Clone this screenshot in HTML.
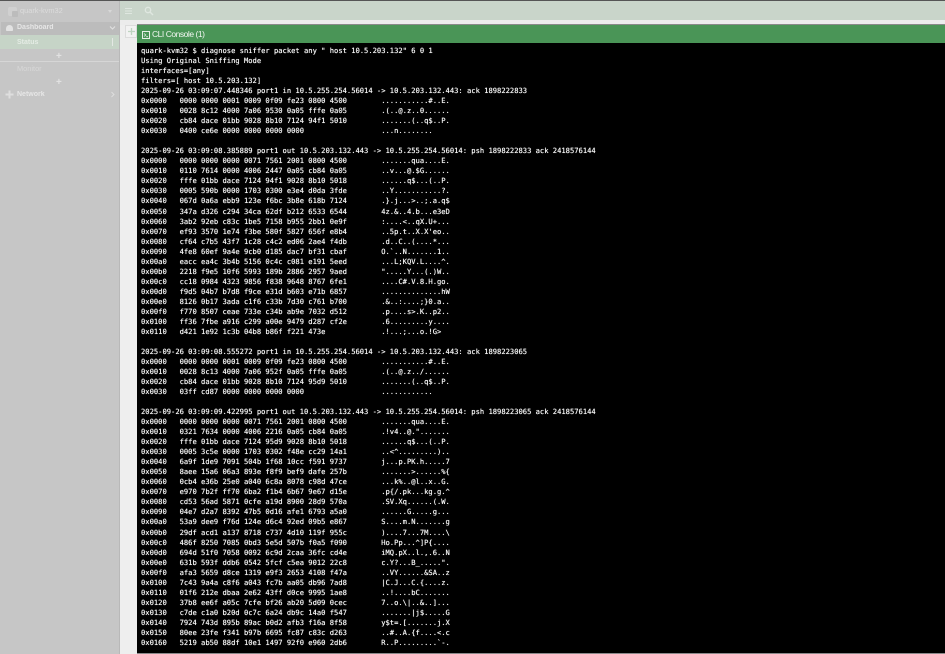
<!DOCTYPE html>
<html><head><meta charset="utf-8">
<style>
html,body{margin:0;padding:0;width:945px;height:654px;overflow:hidden;background:#eeeeee;font-family:"Liberation Sans",sans-serif}
div{position:absolute;box-sizing:border-box}
.t{white-space:nowrap;font-size:7px;line-height:10px;color:#e6e6e6;font-weight:bold;filter:blur(.35px)}
pre{position:absolute;left:141px;top:46px;margin:0;font-family:"DejaVu Sans Mono","Liberation Mono",monospace;font-size:7.13px;line-height:10.03px;color:#f4f4f4;white-space:pre;text-rendering:geometricPrecision;text-shadow:0 0 .5px #fff;filter:blur(.3px)}
</style></head><body>
<div style="left:0;top:0;width:945px;height:1px;background:#555"></div>
<div style="left:0;top:1px;width:119px;height:653px;background:#c6c6c6"></div>
<div style="left:119px;top:1px;width:1px;height:653px;background:#b8b8b8"></div>
<div style="left:120px;top:1px;width:825px;height:19px;background:#c9d5ca"></div>
<div style="left:120px;top:20px;width:825px;height:5px;background:#ececec"></div>
<div style="left:1px;top:22px;width:118px;height:13px;background:#bcbcbc"></div>
<div style="left:0;top:35px;width:119px;height:14px;background:#c6d4c7"></div>
<div style="left:0;top:61px;width:119px;height:1px;background:#d6d6d6"></div>
<div style="left:8px;top:7px;width:9px;height:9px;border-radius:2px;background:#d0d0d0"></div>
<div style="left:12px;top:11px;width:6px;height:6px;border-radius:1px;background:#bcbcbc"></div>
<div class="t" style="left:20px;top:6px;font-weight:normal;font-size:7.4px;color:#dcdcdc">quark-kvm32</div>
<div style="left:108px;top:10px;width:0;height:0;border:2px solid transparent;border-top:3px solid #d8d8d8"></div>
<div style="left:6px;top:25px;width:7px;height:6px;border-radius:4px 4px 1px 1px;background:#e2e2e2"></div>
<div class="t" style="left:17px;top:23px">Dashboard</div>
<svg style="position:absolute;left:109px;top:25px" width="7" height="6"><path d="M1 1.5L3.5 4L6 1.5" fill="none" stroke="#e2e2e2" stroke-width="1"/></svg>
<div class="t" style="left:17px;top:38px;color:#e4ece4">Status</div>
<div style="left:112px;top:38px;width:1px;height:8px;background:#e4e8e4"></div>
<div class="t" style="left:56px;top:52px;font-size:10px;color:#e2e2e2">+</div>
<div class="t" style="left:17px;top:64px;font-weight:normal;font-size:7.4px;color:#d8d8d8">Monitor</div>
<div class="t" style="left:56px;top:78px;font-size:10px;color:#e2e2e2">+</div>
<svg style="position:absolute;left:5px;top:90px" width="9" height="9"><path d="M4.5 .5V8.5M.5 4.5H8.5" stroke="#dedede" stroke-width="2"/></svg>
<div class="t" style="left:17px;top:90px">Network</div>
<svg style="position:absolute;left:110px;top:91px" width="5" height="7"><path d="M1.5 1L4 3.5L1.5 6" fill="none" stroke="#dedede" stroke-width="1"/></svg>
<svg style="position:absolute;left:124px;top:7px" width="9" height="8"><path d="M1 1.5H8M1 4H8M1 6.5H8" stroke="#dfe7e0" stroke-width="1"/></svg>
<svg style="position:absolute;left:144px;top:6px" width="10" height="10"><circle cx="4" cy="4" r="2.7" fill="none" stroke="#dfe7e0" stroke-width="1.3"/><path d="M6 6L9 9" stroke="#dfe7e0" stroke-width="1.4"/></svg>
<div style="left:125px;top:25px;width:12px;height:13px;border:1px solid #dcdcdc;background:#f2f2f2"></div>
<svg style="position:absolute;left:127px;top:27px" width="9" height="9"><path d="M4.5 1V8M1 4.5H8" stroke="#bfd4c1" stroke-width="1.3"/></svg>
<div style="left:137px;top:24px;width:808px;height:1px;background:#8a8a8a"></div>
<div style="left:137px;top:25px;width:808px;height:18px;background:#4a9557"></div>
<div style="left:137px;top:43px;width:808px;height:610px;background:#000"></div>
<div style="left:137px;top:653px;width:808px;height:1px;background:#8a8a8a"></div>
<svg style="position:absolute;left:142px;top:30.5px" width="8" height="8"><rect x=".5" y=".5" width="7" height="7" fill="none" stroke="#e8f0e8" stroke-width="1"/><path d="M2 2.5L3.8 4L2 5.5M4.2 5.7H6" fill="none" stroke="#e8f0e8" stroke-width=".8"/></svg>
<div style="left:152px;top:29px;font-size:8.5px;line-height:11px;letter-spacing:-.47px;color:#f0f5f0;white-space:nowrap;filter:blur(.25px)">CLI Console (1)</div>
<pre>quark-kvm32 $ diagnose sniffer packet any " host 10.5.203.132" 6 0 1
Using Original Sniffing Mode
interfaces=[any]
filters=[ host 10.5.203.132]
2025-09-26 03:09:07.448346 port1 in 10.5.255.254.56014 -&gt; 10.5.203.132.443: ack 1898222833
0x0000   0000 0000 0001 0009 0f09 fe23 0800 4500        ...........#..E.
0x0010   0028 8c12 4000 7a06 9530 0a05 fffe 0a05        .(..@.z..0......
0x0020   cb84 dace 01bb 9028 8b10 7124 94f1 5010        .......(..q$..P.
0x0030   0400 ce6e 0000 0000 0000 0000                  ...n........

2025-09-26 03:09:08.385889 port1 out 10.5.203.132.443 -&gt; 10.5.255.254.56014: psh 1898222833 ack 2418576144
0x0000   0000 0000 0000 0071 7561 2001 0800 4500        .......qua....E.
0x0010   0110 7614 0000 4006 2447 0a05 cb84 0a05        ..v...@.$G......
0x0020   fffe 01bb dace 7124 94f1 9028 8b10 5018        ......q$...(..P.
0x0030   0005 590b 0000 1703 0300 e3e4 d0da 3fde        ..Y...........?.
0x0040   067d 0a6a ebb9 123e f6bc 3b8e 618b 7124        .}.j...&gt;..;.a.q$
0x0050   347a d326 c294 34ca 62df b212 6533 6544        4z.&amp;..4.b...e3eD
0x0060   3ab2 92eb c83c 1be5 7158 b955 2bb1 0e9f        :....&lt;..qX.U+...
0x0070   ef93 3570 1e74 f3be 580f 5827 656f e8b4        ..5p.t..X.X'eo..
0x0080   cf64 c7b5 43f7 1c28 c4c2 ed06 2ae4 f4db        .d..C..(....*...
0x0090   4fe8 60ef 9a4e 9cb0 d185 dac7 bf31 cbaf        O.`..N.......1..
0x00a0   eacc ea4c 3b4b 5156 0c4c c081 e191 5eed        ...L;KQV.L....^.
0x00b0   2218 f9e5 10f6 5993 189b 2886 2957 9aed        ".....Y...(.)W..
0x00c0   cc18 0984 4323 9856 f838 9648 8767 6fe1        ....C#.V.8.H.go.
0x00d0   f9d5 04b7 b7d8 f9ce e31d b603 e71b 6857        ..............hW
0x00e0   8126 0b17 3ada c1f6 c33b 7d30 c761 b700        .&amp;..:....;}0.a..
0x00f0   f770 8507 ceae 733e c34b ab9e 7032 d512        .p....s&gt;.K..p2..
0x0100   ff36 7fbe a916 c299 a00e 9479 d287 cf2e        .6.........y....
0x0110   d421 1e92 1c3b 04b8 b86f f221 473e             .!...;...o.!G&gt;

2025-09-26 03:09:08.555272 port1 in 10.5.255.254.56014 -&gt; 10.5.203.132.443: ack 1898223065
0x0000   0000 0000 0001 0009 0f09 fe23 0800 4500        ...........#..E.
0x0010   0028 8c13 4000 7a06 952f 0a05 fffe 0a05        .(..@.z../......
0x0020   cb84 dace 01bb 9028 8b10 7124 95d9 5010        .......(..q$..P.
0x0030   03ff cd87 0000 0000 0000 0000                  ............

2025-09-26 03:09:09.422995 port1 out 10.5.203.132.443 -&gt; 10.5.255.254.56014: psh 1898223065 ack 2418576144
0x0000   0000 0000 0000 0071 7561 2001 0800 4500        .......qua....E.
0x0010   0321 7634 0000 4006 2216 0a05 cb84 0a05        .!v4..@.".......
0x0020   fffe 01bb dace 7124 95d9 9028 8b10 5018        ......q$...(..P.
0x0030   0005 3c5e 0000 1703 0302 f48e cc29 14a1        ..&lt;^.........)..
0x0040   6a9f 1de9 7091 504b 1f68 10cc f591 9737        j...p.PK.h.....7
0x0050   8aee 15a6 06a3 893e f8f9 bef9 dafe 257b        .......&gt;......%{
0x0060   0cb4 e36b 25e0 a040 6c8a 8078 c98d 47ce        ...k%..@l..x..G.
0x0070   e970 7b2f ff70 6ba2 f1b4 6b67 9e67 d15e        .p{/.pk...kg.g.^
0x0080   cd53 56ad 5871 0cfe a19d 8900 28d9 570a        .SV.Xq......(.W.
0x0090   04e7 d2a7 8392 47b5 0d16 afe1 6793 a5a0        ......G.....g...
0x00a0   53a9 dee9 f76d 124e d6c4 92ed 09b5 e867        S....m.N.......g
0x00b0   29df acd1 a137 8718 c737 4d10 119f 955c        )....7...7M....\
0x00c0   486f 8250 7085 0bd3 5e5d 507b f0a5 f090        Ho.Pp...^]P{....
0x00d0   694d 51f0 7058 0092 6c9d 2caa 36fc cd4e        iMQ.pX..l.,.6..N
0x00e0   631b 593f ddb6 0542 5fcf c5ea 9012 22c8        c.Y?...B_.....".
0x00f0   afa3 5659 d8ce 1319 e9f3 2653 4108 f47a        ..VY......&amp;SA..z
0x0100   7c43 9a4a c8f6 a043 fc7b aa05 db96 7ad8        |C.J...C.{....z.
0x0110   01f6 212e dbaa 2e62 43ff d0ce 9995 1ae8        ..!....bC.......
0x0120   37b8 ee6f a05c 7cfe bf26 ab20 5d09 0cec        7..o.\|..&amp;..]...
0x0130   c7de c1a0 b20d 0c7c 6a24 db9c 14a0 f547        .......|j$.....G
0x0140   7924 743d 895b 89ac b0d2 afb3 f16a 8f58        y$t=.[.......j.X
0x0150   80ee 23fe f341 b97b 6695 fc87 c83c d263        ..#..A.{f....&lt;.c
0x0160   5219 ab50 88df 10e1 1497 92f0 e960 2db6        R..P.........`-.</pre>
</body></html>
